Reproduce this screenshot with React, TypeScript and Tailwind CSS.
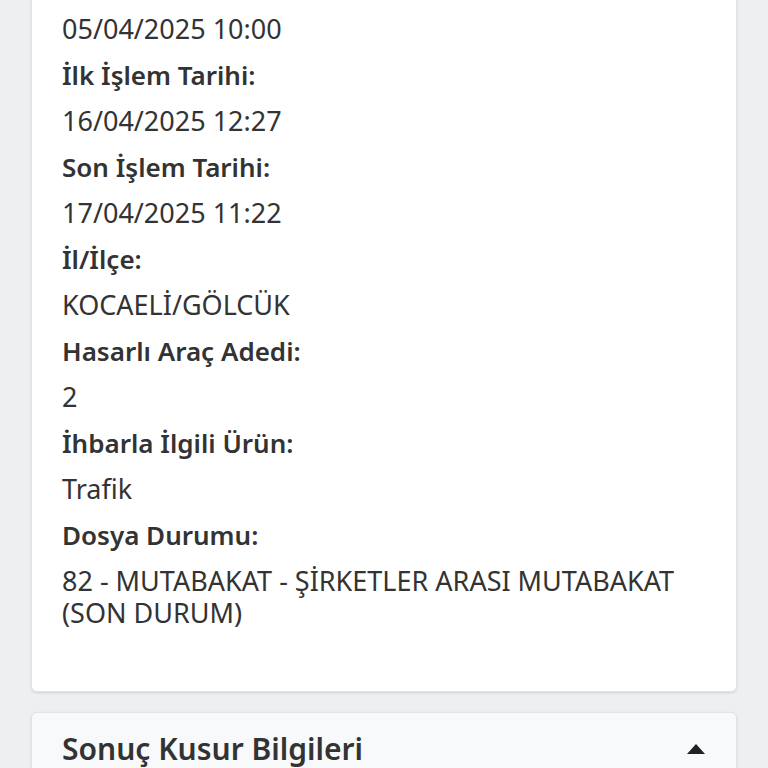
import React from 'react';

const FIELDS: { label: string; value: string }[] = [
  { label: 'İlk İşlem Tarihi:', value: '16/04/2025 12:27' },
  { label: 'Son İşlem Tarihi:', value: '17/04/2025 11:22' },
  { label: 'İl/İlçe:', value: 'KOCAELİ/GÖLCÜK' },
  { label: 'Hasarlı Araç Adedi:', value: '2' },
  { label: 'İhbarla İlgili Ürün:', value: 'Trafik' },
  { label: 'Dosya Durumu:', value: '82 - MUTABAKAT - ŞİRKETLER ARASI MUTABAKAT (SON DURUM)' },
];

export default function App() {
  return (
    <div
      className="min-h-[768px] bg-[#eeeff1] px-[31px] overflow-hidden text-[#333]"
      style={{ fontFamily: '"Noto Sans", "Liberation Sans", sans-serif' }}
    >
      <div className="-mt-[42px] rounded-md border border-[#e2e3e5] bg-white px-[30px] pt-[54px] pb-[48px] shadow-sm">
        <p className="text-[27px] leading-[32px] mb-[14px]">05/04/2025 10:00</p>
        {FIELDS.map((f) => (
          <div key={f.label}>
            <p className="text-[26px] leading-[32px] font-semibold mb-[14px]">{f.label}</p>
            <p className="text-[27px] leading-[32px] mb-[14px]">{f.value}</p>
          </div>
        ))}
      </div>

      <div className="mt-[20px] rounded-md border border-[#e2e3e5] bg-[#f8f9fa] shadow-sm">
        <div className="flex items-center justify-between px-[30px] h-[72px]">
          <h2 className="text-[30px] leading-[36px] font-semibold">Sonuç Kusur Bilgileri</h2>
          <svg width="18" height="10" viewBox="0 0 18 10" className="mr-[1px]">
            <path d="M9 0 L18 10 L0 10 Z" fill="#222" />
          </svg>
        </div>
      </div>
    </div>
  );
}
